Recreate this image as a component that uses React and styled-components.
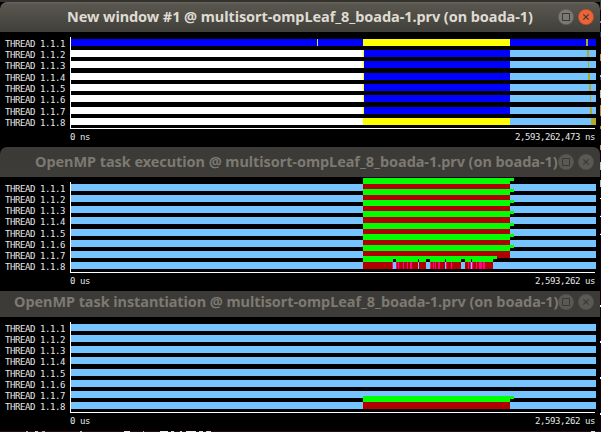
import React from "react";
import styled, { createGlobalStyle } from "styled-components";

const Global = createGlobalStyle`
  * { box-sizing: border-box; }
  html, body { margin: 0; background: #000; overflow: hidden; }
`;

const C = {
  blue: "#0000ff",
  white: "#ffffff",
  yellow: "#ffff00",
  sky: "#75c3ff",
  olive: "#b1a92b",
  red: "#b10000",
  pink: "#ff0090",
  green: "#00ff00",
  mark: "#d8d878",
  black: "#000000",
};

const Desktop = styled.main`
  display: grid;
  grid-template-columns: 600px 1px;
  width: 601px;
  height: 432px;
  background: #000;
`;

const Stack = styled.div`
  display: flex;
  flex-direction: column;
  min-width: 0;
`;

const TopStrip = styled.div`
  height: 2px;
  background: #33322f;
`;

const EdgeStrip = styled.div`
  background: linear-gradient(
    #3a3b3a 0 10px, #150010 10px 21px, #8a9098 21px 23px, #150010 23px 32px, #203a78 32px 37px,
    #150010 37px 54px, #c8885c 54px 61px, #150010 61px 75px, #b8b8c0 75px 77px, #203a78 77px 80px,
    #150010 80px 90px, #a8c8c0 90px 98px, #150010 98px 105px, #c88440 105px 116px,
    #150010 116px 126px, #c07848 126px 129px, #150010 129px 145px, #b8906c 145px 150px,
    #150010 150px 162px, #a8c8c0 162px 170px, #150010 170px 180px, #a8c8c0 180px 187px,
    #150010 187px 198px, #fff 198px 199px, #150010 199px 215px, #203a78 215px 216px,
    #fff 216px 217px, #150010 217px 233px, #203a78 233px 234px, #fff 234px 235px,
    #150010 235px 305px, #fff 305px 307px, #150010 307px 341px, #fff 341px 343px,
    #150010 343px 377px, #fff 377px 379px, #150010 379px 413px, #fff 413px 415px, #150010 415px
  );
`;

const Frame = styled.section`
  height: ${(p) => p.$height}px;
  margin-bottom: ${(p) => p.$gap}px;
`;

const TitleBar = styled.header`
  display: flex;
  align-items: center;
  height: ${(p) => p.$height}px;
  padding: 0 6px ${(p) => p.$lift}px ${(p) => p.$indent}px;
  border-radius: ${(p) => (p.$square ? "0" : "7px 7px 0 0")};
  background: ${(p) =>
    p.$active ? "linear-gradient(#68665d 0, #59574f 2px, #403f3a 100%)" : "linear-gradient(#3b3a37, #3d3c38)"};
  color: ${(p) => (p.$active ? "#dfdbd2" : "#7c7972")};
`;

const Title = styled.h1`
  flex: 1 1 0;
  min-width: 0;
  margin: 0;
  padding-bottom: 2px;
  font: 700 14.5px/20px "Noto Sans", "Open Sans", sans-serif;
  letter-spacing: ${(p) => p.$tracking}px;
  white-space: nowrap;
`;

const Controls = styled.div`
  display: flex;
  flex: none;
  gap: 4px;
  svg { display: block; }
`;

const Plot = styled.div`
  padding-top: 5px;
`;

const Chart = styled.div`
  display: grid;
  grid-template-columns: 65px 526px;
  padding-left: 5px;
`;

const Labels = styled.div`
  padding-top: 1px;
`;

const mono = `
  font-family: "DejaVu Sans Mono", monospace;
  font-size: 9px;
  letter-spacing: -0.418px;
  color: #e8e8e8;
  white-space: pre;
`;

const Label = styled.div`
  ${mono}
  height: ${(p) => p.$pitch}px;
  line-height: 12px;
`;

const Lanes = styled.div`
  height: ${(p) => p.$height}px;
  width: 526px;
  padding-top: 2px;
  border-left: 1px solid #fff;
`;

const Lane = styled.div`
  position: relative;
  height: ${(p) => p.$pitch}px;
`;

const Bar = styled.div`
  display: flex;
  height: 7px;
`;

const Segment = styled.span`
  flex: 0 0 ${(p) => p.$w}px;
  background: ${(p) => p.$c};
`;

const Flag = styled.div`
  position: absolute;
  top: -6px;
  left: 292px;
`;

const FlagTop = styled.div`
  width: ${(p) => p.$w}px;
  height: 3px;
  background: ${C.green};
`;

const FlagBase = styled.div`
  display: flex;
  height: 3px;
`;

const Baseline = styled.div`
  width: 525px;
  height: 1px;
  margin-left: 70px;
  background: #fff;
`;

const Scale = styled.footer`
  ${mono}
  display: flex;
  justify-content: space-between;
  width: 525px;
  margin: 2px 0 0 70px;
  line-height: 12px;
`;

const BottomEdge = styled.div`
  height: 1px;
  background: linear-gradient(90deg, #2a0a1c 0 26px, #aaa 26px 28px, #2a0a1c 28px 35px, #ccc 35px 38px,
    #2a0a1c 38px 42px, #aaa 42px 45px, #2a0a1c 45px 80px, #bbb 80px 82px, #2a0a1c 82px 124px,
    #eee 124px 130px, #2a0a1c 130px 143px, #bbb 143px 144px, #2a0a1c 144px 160px, #eee 160px 168px,
    #2a0a1c 168px 171px, #ddd 171px 174px, #2a0a1c 174px 180px, #ddd 180px 182px, #2a0a1c 182px 186px,
    #eee 186px 196px, #2a0a1c 196px 199px, #ddd 199px 203px, #2a0a1c 203px 206px, #ddd 206px 211px,
    #2a0a1c 211px 591px, #ddd 591px 595px, #2a0a1c 595px);
`;

function WindowButton({ kind, active }) {
  const hot = active && kind === "close";
  const fill = hot ? "#ec6337" : active ? "#7b7972" : "#5b5953";
  const ink = active ? "#3b3935" : "#3a3935";
  return (
    <svg width="16" height="16" viewBox="0 0 16 16" fill="none">
      <circle cx="8" cy="8" r="7.7" fill={fill} stroke={active ? (hot ? "#a9482a" : "#5d5b55") : "#504f4a"} strokeWidth=".6" />
      {kind === "close" ? (
        <path d="M5.3 5.3 10.7 10.7M10.7 5.3 5.3 10.7" stroke={ink} strokeWidth="1.2" />
      ) : (
        <rect x="4.5" y="4.5" width="7" height="7" stroke={ink} />
      )}
    </svg>
  );
}

/* Turns [start, colour] marks into consecutive widths up to the end point. */
function spans(marks, end) {
  return marks.map(([x, c], i) => [(i + 1 < marks.length ? marks[i + 1][0] : end) - x, c]);
}

function Segments({ marks, end }) {
  return spans(marks, end).map(([w, c], i) => <Segment key={i} $w={w} $c={c} />);
}

function TraceWindow({ title, indent, tracking, active, barHeight = 30, lift = 0, square, height, gap, pitches, rows, unit, total }) {
  return (
    <Frame $height={height} $gap={gap}>
      <TitleBar $active={active} $height={barHeight} $lift={lift} $indent={indent} $square={square}>
        <Title $tracking={tracking}>{title}</Title>
        <Controls>
          <WindowButton kind="maximize" active={active} />
          <WindowButton kind="close" active={active} />
        </Controls>
      </TitleBar>
      <Plot>
        <Chart>
          <Labels>
            {pitches.map((p, i) => (
              <Label key={i} $pitch={p}>{`THREAD 1.1.${i + 1}`}</Label>
            ))}
          </Labels>
          <Lanes $height={active ? 91 : 90}>
            {rows.map((row, i) => (
              <Lane key={i} $pitch={pitches[i]}>
                <Bar><Segments marks={row.marks} end={596} /></Bar>
                {row.flag && (
                  <Flag>
                    <FlagTop $w={row.flag.end + 4 - 363} />
                    <FlagBase><Segments marks={row.flag.marks} end={row.flag.end} /></FlagBase>
                  </Flag>
                )}
              </Lane>
            ))}
          </Lanes>
        </Chart>
        <Baseline />
        <Scale><span>{`0 ${unit}`}</span><span>{`${total} ${unit}`}</span></Scale>
      </Plot>
    </Frame>
  );
}

const waiting = (x, w) => ({
  marks: [[71, C.white], [363, C.yellow], [364, C.blue], [510, C.sky], [x, C.olive], [x + w, C.sky]],
});

const stateRows = [
  { marks: [[71, C.blue], [317, C.mark], [318, C.blue], [363, C.yellow], [510, C.blue], [586, C.olive], [588, C.blue]] },
  waiting(587, 2),
  waiting(588, 1),
  waiting(588, 2),
  waiting(589, 2),
  waiting(590, 1),
  waiting(590, 2),
  { marks: [[71, C.white], [363, C.yellow], [510, C.sky], [591, C.olive]] },
];

const busy = {
  marks: [[71, C.sky], [363, C.red], [510, C.sky]],
  flag: { end: 510, marks: [[363, C.green]] },
};

const lastExecution = {
  marks: [
    [71, C.sky], [363, C.red], [392, C.pink], [393, C.sky], [396, C.pink], [397, C.red], [398, C.pink],
    [399, C.red], [403, C.pink], [404, C.red], [407, C.pink], [408, C.red], [410, C.pink], [412, C.red],
    [418, C.sky], [419, C.red], [426, C.sky], [430, C.pink], [431, C.red], [433, C.pink], [434, C.red],
    [435, C.pink], [436, C.red], [438, C.pink], [440, C.red], [445, C.sky], [446, C.pink], [447, C.red],
    [451, C.pink], [452, C.red], [461, C.sky], [465, C.red], [468, C.pink], [469, C.red], [470, C.pink],
    [471, C.sky], [472, C.pink], [473, C.red], [476, C.pink], [477, C.red], [479, C.pink], [482, C.red],
    [483, C.pink], [485, C.red], [493, C.sky],
  ],
  flag: {
    end: 493,
    marks: [
      [363, C.green], [393, C.black], [396, C.green], [418, C.black], [419, C.green], [426, C.black],
      [430, C.green], [445, C.black], [446, C.green], [461, C.black], [465, C.green], [471, C.black], [472, C.green],
    ],
  },
};

const idle = { marks: [[71, C.sky]] };

export default function App() {
  return (
    <>
      <Global />
      <Desktop>
        <Stack>
          <TopStrip />
          <TraceWindow
            active title="New window #1 @ multisort-ompLeaf_8_boada-1.prv (on boada-1)"
            indent={67} tracking={-0.07} height={144} gap={1}
            pitches={[11, 11, 12, 11, 11, 12, 11, 11]} rows={stateRows} unit="ns" total="2,593,262,473"
          />
          <TraceWindow
            title="OpenMP task execution @ multisort-ompLeaf_8_boada-1.prv (on boada-1)"
            indent={35} tracking={-0.065} height={143} gap={1}
            pitches={[11, 11, 11, 12, 11, 11, 11, 11]}
            rows={[busy, busy, busy, busy, busy, busy, busy, lastExecution]} unit="us" total="2,593,262"
          />
          <TraceWindow
            title="OpenMP task instantiation @ multisort-ompLeaf_8_boada-1.prv (on boada-1)"
            indent={14} tracking={-0.075} height={140} gap={0} barHeight={26} lift={4} square
            pitches={[11, 11, 11, 12, 11, 11, 11, 11]}
            rows={[idle, idle, idle, idle, idle, idle, idle, busy]} unit="us" total="2,593,262"
          />
          <BottomEdge />
        </Stack>
        <EdgeStrip />
      </Desktop>
    </>
  );
}
